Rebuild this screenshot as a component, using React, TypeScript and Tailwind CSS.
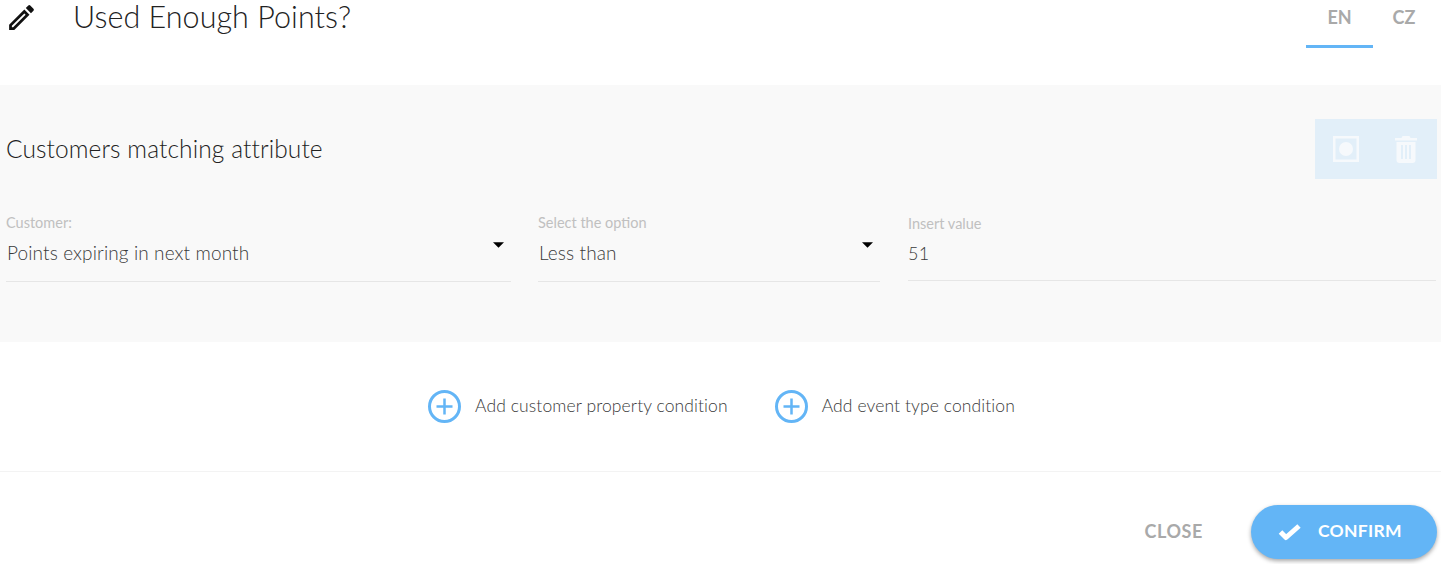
import React from 'react';

const font = "font-['Lato','Noto_Sans',sans-serif]";

const Caret = () => (
  <svg width="11" height="6" viewBox="0 0 12 6" className="mt-[1px] shrink-0">
    <path d="M0 0h12L6 6z" fill="#000" />
  </svg>
);

const PlusCircle = () => (
  <svg width="33" height="33" viewBox="0 0 33 33" fill="none" stroke="#63b5f6" className="shrink-0">
    <circle cx="16.5" cy="16.5" r="15" strokeWidth="3" />
    <path d="M16.5 8.5v16M8.5 16.5h16" strokeWidth="2.5" />
  </svg>
);

const SelectField = ({ label, value, className }: { label: string; value: string; className: string }) => (
  <div className={`flex flex-col ${className}`}>
    <span className="text-[14.5px] leading-[16px] text-[#c0c0c0]">{label}</span>
    <div className="flex justify-between items-start h-[51px] pt-[10px] pr-[7px] border-b border-[#e6e6e6]">
      <span className="pl-px text-[19px] leading-[24px] text-[#3a3a3a] font-light tracking-[0.12px]">{value}</span>
      <Caret />
    </div>
  </div>
);

export default function App() {
  return (
    <div className={`w-[1441px] h-[564px] bg-white overflow-hidden ${font}`}>
      {/* header */}
      <div className="flex justify-between h-[85px]">
        <div className="flex items-start">
          <svg width="33" height="33" viewBox="0 0 24 24" className="ml-[5px] mt-[1px]" fill="#111">
            <path d="M3 17.25V21h3.75L17.81 9.94l-3.75-3.75L3 17.25zM5.92 19H5v-.92l9.06-9.06.92.92L5.92 19zM20.71 7.04a1 1 0 0 0 0-1.41l-2.34-2.34a1 1 0 0 0-1.41 0l-1.83 1.83 3.75 3.75 1.83-1.83z" />
          </svg>
          <h1 className="ml-[35px] text-[30.5px] leading-[32px] font-light text-[#222] tracking-[0.05px]">Used Enough Points?</h1>
        </div>
        <div className="flex h-[48px] mr-[4px]">
          <div className="w-[67px] h-[48px] border-b-[3px] border-[#63b5f6] text-center pt-[6px] text-[18px] leading-[22px] font-bold text-[#a9a9a9]">EN</div>
          <div className="w-[64px] text-center pt-[6px] pr-[2px] text-[18px] leading-[22px] font-bold text-[#a9a9a9]">CZ</div>
        </div>
      </div>

      {/* condition panel */}
      <div className="h-[257px] bg-[#f9f9f9] pl-[6px] pr-[4px] pt-[34px]">
        <div className="flex justify-between items-center h-[60px]">
          <h2 className="text-[24.5px] leading-[30px] font-light text-[#222] tracking-[0.1px]">Customers matching attribute</h2>
          <div className="flex items-center w-[122px] h-[60px] bg-[#e2eff9] pl-[18px] gap-[36px]">
            <svg width="26" height="26" viewBox="0 0 26 26" fill="none">
              <rect x="1.25" y="1.25" width="23.5" height="23.5" stroke="#f6f9fc" strokeWidth="2.5" />
              <circle cx="13" cy="13" r="7" fill="#f6f9fc" />
            </svg>
            <svg width="22" height="27" viewBox="0 0 22 27" fill="#f6f9fc">
              <path d="M7.5 0h7l1 2H22v2.5H0V2h6.5zM1.5 6h19v18a3 3 0 0 1-3 3h-13a3 3 0 0 1-3-3zM6 9v14h2V9zm4 0v14h2V9zm4 0v14h2V9z" fillRule="evenodd" />
            </svg>
          </div>
        </div>
        <div className="flex mt-[36px] mr-[1px]">
          <SelectField label="Customer:" value="Points expiring in next month" className="w-[505px] mr-[27px]" />
          <SelectField label="Select the option" value="Less than" className="w-[342px] mr-[28px]" />
          <div className="flex-1 flex flex-col pt-px">
            <span className="text-[14.5px] leading-[16px] text-[#c0c0c0]">Insert value</span>
            <div className="h-[49px] pt-[9px] border-b border-[#e6e6e6] text-[18px] leading-[24px] text-[#3a3a3a] font-light tracking-[0.3px]">51</div>
          </div>
        </div>
      </div>

      {/* add condition row */}
      <div className="h-[130px] flex items-center justify-center border-b border-[#f3f3f3] pl-[2px] gap-[47px]">
        <div className="flex items-center gap-[14px]">
          <PlusCircle />
          <span className="text-[17.5px] text-[#3a3a3a] font-light tracking-[0.1px]">Add customer property condition</span>
        </div>
        <div className="flex items-center gap-[14px]">
          <PlusCircle />
          <span className="text-[17.5px] text-[#3a3a3a] font-light tracking-[0.1px]">Add event type condition</span>
        </div>
      </div>

      {/* footer */}
      <div className="flex justify-end items-center pt-[33px] pr-[4px] gap-[48px]">
        <button className="pb-px text-[18px] font-bold text-[#a9a9a9] tracking-[0.6px]">CLOSE</button>
        <button className="w-[186px] h-[54px] rounded-full bg-[#63b5f6] shadow-[0_2px_4px_rgba(0,0,0,0.35)] flex items-center pl-[28px] pb-px text-white text-[17.5px] font-bold tracking-[0.3px]">
          <svg width="21" height="16" viewBox="0 0 21 16" fill="none" stroke="#fff" strokeWidth="5" strokeLinejoin="round" className="mt-px overflow-visible">
            <path d="M1.5 8l5.5 5.5L20 2" />
          </svg>
          <span className="ml-[18px]">CONFIRM</span>
        </button>
      </div>
    </div>
  );
}
